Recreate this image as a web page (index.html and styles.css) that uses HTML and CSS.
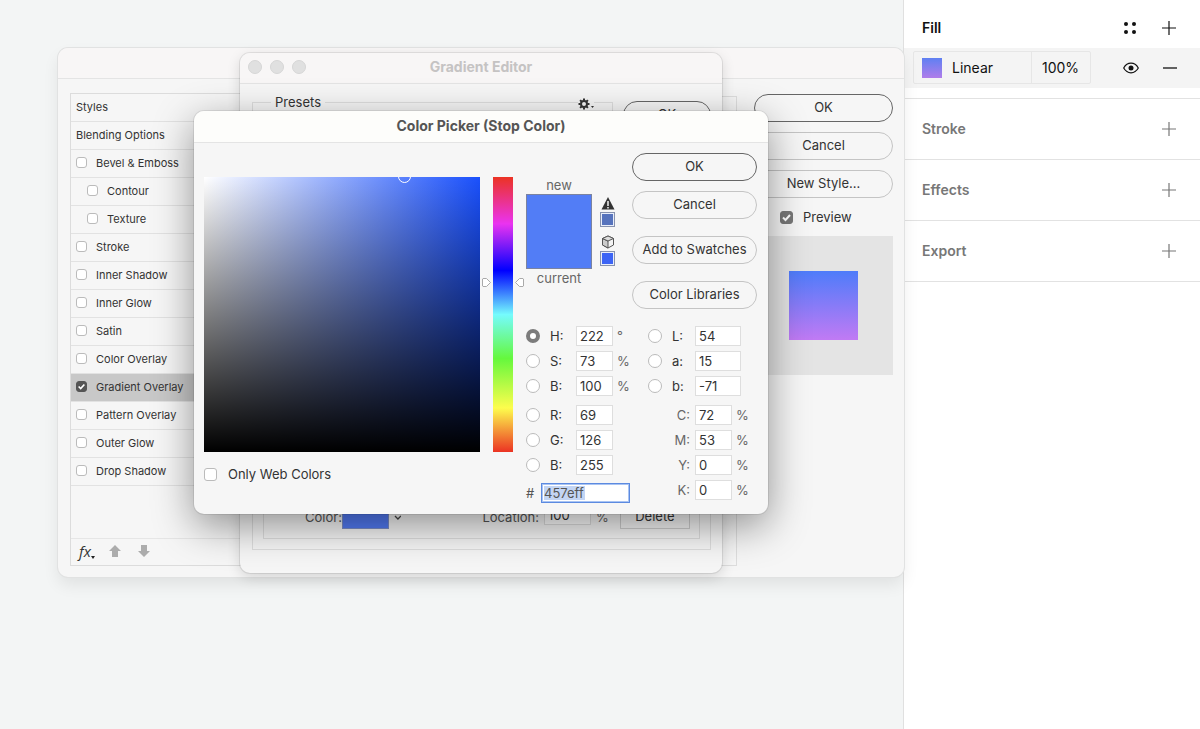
FILE: index.html
```html
<!DOCTYPE html>
<html lang="en">
<head>
<meta charset="utf-8">
<title>Gradient fill</title>
<link rel="stylesheet" href="styles.css">
</head>
<body>
<svg class="defs" aria-hidden="true">
  <symbol id="plus" viewBox="0 0 14 14"><path d="M7 0v14M0 7h14" fill="none" stroke="currentColor" stroke-width="1.2"/></symbol>
</svg>
<div class="app">
  <main class="canvas">

    <section class="window styles-window" aria-label="Layer Style">
      <header class="titlebar tinted"></header>
      <div class="styles-body">
        <div class="style-list">
          <div class="style-row">Styles</div>
          <div class="style-row">Blending Options</div>
          <label class="style-row"><input type="checkbox" class="check small">Bevel &amp; Emboss</label>
          <label class="style-row nested"><input type="checkbox" class="check small">Contour</label>
          <label class="style-row nested"><input type="checkbox" class="check small">Texture</label>
          <label class="style-row"><input type="checkbox" class="check small">Stroke</label>
          <label class="style-row"><input type="checkbox" class="check small">Inner Shadow</label>
          <label class="style-row"><input type="checkbox" class="check small">Inner Glow</label>
          <label class="style-row"><input type="checkbox" class="check small">Satin</label>
          <label class="style-row"><input type="checkbox" class="check small">Color Overlay</label>
          <label class="style-row selected"><input type="checkbox" class="check small" checked>Gradient Overlay</label>
          <label class="style-row"><input type="checkbox" class="check small">Pattern Overlay</label>
          <label class="style-row"><input type="checkbox" class="check small">Outer Glow</label>
          <label class="style-row"><input type="checkbox" class="check small">Drop Shadow</label>
          <div class="list-tools">
            <button class="icon-button fx" aria-label="Add effect"><i>fx</i><svg width="4" height="3" viewBox="0 0 4 3"><path d="M0 0h4L2 3z" fill="#222"/></svg></button>
            <button class="icon-button" aria-label="Move up"><svg width="12" height="12" viewBox="0 0 12 12"><path d="M6 0l6 6H9v6H3V6H0z" fill="#acacac"/></svg></button>
            <button class="icon-button" aria-label="Move down"><svg width="12" height="12" viewBox="0 0 12 12"><path d="M6 12l6-6H9V0H3v6H0z" fill="#acacac"/></svg></button>
          </div>
        </div>
        <div class="settings-frame"></div>
        <div class="side-actions">
          <button class="pill primary">OK</button>
          <button class="pill">Cancel</button>
          <button class="pill">New Style...</button>
          <label class="preview-toggle"><input type="checkbox" class="check" checked>Preview</label>
          <div class="preview-box"><div class="preview-swatch"></div></div>
        </div>
      </div>
    </section>

    <section class="window editor-window" aria-label="Gradient Editor">
      <header class="titlebar tinted lights-bar">
        <div class="lights"><span class="light"></span><span class="light"></span><span class="light"></span></div>
        <h2 class="window-title faded">Gradient Editor</h2>
      </header>
      <div class="editor-body">
        <div class="editor-top">
          <fieldset class="presets">
            <legend>Presets</legend>
            <button class="icon-button gear" aria-label="Preset options">
              <svg width="16" height="12" viewBox="0 0 16 12"><g stroke="#333" stroke-width="2"><path d="M6 .5v2M6 9.500v2M.5 6h2M9.500 6h2M2.100 2.100l1.500 1.500M8.400 8.400l1.500 1.500M9.900 2.100L8.400 3.600M3.600 8.400L2.100 9.900"/><circle cx="6" cy="6" r="3" fill="none"/></g><path d="M13 8h3l-1.500 2z" fill="#333"/></svg>
            </button>
          </fieldset>
          <button class="pill primary">OK</button>
        </div>
        <div class="stops-frame">
          <div class="stops">
            <span class="stop-label">Color:</span>
            <button class="stop-color" aria-label="Stop color"></button>
            <svg class="chevron" width="8" height="5" viewBox="0 0 8 5"><path d="M1 1l3 3 3-3" fill="none" stroke="#444" stroke-width="1.300"/></svg>
            <label class="stop-label location" for="location">Location:</label>
            <input class="field stop-location" id="location" value="100">
            <span class="percent">%</span>
            <button class="delete">Delete</button>
          </div>
        </div>
      </div>
    </section>

    <section class="window picker-window" aria-label="Color Picker">
      <header class="titlebar"><h2 class="window-title">Color Picker (Stop Color)</h2></header>
      <div class="picker-body">
        <div class="picker-left">
          <div class="spectrum-row">
            <div class="spectrum"><span class="ring"></span></div>
            <div class="hue">
              <svg class="handle handle-left" width="9" height="9" viewBox="0 0 9 9"><path d="M1 .5h3.500L8.500 4.500 4.500 8.500H1L.5 8V1z" fill="#fff" stroke="#aaa"/></svg>
              <svg class="handle handle-right" width="9" height="9" viewBox="0 0 9 9"><path d="M8 .5H4.500L.5 4.500l4 4H8l.5-.5V1z" fill="#fff" stroke="#aaa"/></svg>
            </div>
          </div>
          <label class="web-only"><input type="checkbox" class="check">Only Web Colors</label>
        </div>
        <div class="picker-right">
          <div class="picker-top">
            <div class="compare"><span>new</span><div class="compare-swatch"></div><span>current</span></div>
            <div class="warnings">
              <svg width="14" height="14" viewBox="0 0 14 14"><path d="M7 1l6.500 12.500H.5z" fill="#333"/><path d="M7 5v5M7 11v1.500" stroke="#fff" stroke-width="1.400"/></svg>
              <button class="mini gamut" aria-label="Use printable color"></button>
              <svg class="cube" width="14" height="14" viewBox="0 0 14 14"><path d="M7 1l5.500 2.500v6.500L7 13 1.500 10V3.500z" fill="#f4f4f4" stroke="#555"/><path d="M1.500 3.500L7 6v7l-5.500-3z" fill="#ccc" stroke="#555"/><path d="M7 1l5.500 2.500L7 6 1.500 3.500z" fill="#ddd" stroke="#555"/></svg>
              <button class="mini web" aria-label="Use web color"></button>
            </div>
            <div class="picker-actions">
              <button class="pill primary">OK</button>
              <button class="pill">Cancel</button>
              <button class="pill spaced">Add to Swatches</button>
              <button class="pill spaced">Color Libraries</button>
            </div>
          </div>
          <div class="values">
            <div class="value-column">
              <div class="value-row"><input type="radio" name="channel" class="radio" aria-label="Hue" checked><label for="h">H:</label><input class="field" id="h" value="222"><span class="unit">°</span></div>
              <div class="value-row"><input type="radio" name="channel" class="radio" aria-label="Saturation"><label for="s">S:</label><input class="field" id="s" value="73"><span class="unit">%</span></div>
              <div class="value-row"><input type="radio" name="channel" class="radio" aria-label="Brightness"><label for="v">B:</label><input class="field" id="v" value="100"><span class="unit">%</span></div>
              <div class="value-row group"><input type="radio" name="channel" class="radio" aria-label="Red"><label for="r">R:</label><input class="field" id="r" value="69"></div>
              <div class="value-row"><input type="radio" name="channel" class="radio" aria-label="Green"><label for="g">G:</label><input class="field" id="g" value="126"></div>
              <div class="value-row"><input type="radio" name="channel" class="radio" aria-label="Blue"><label for="b">B:</label><input class="field" id="b" value="255"></div>
              <div class="hex-row"><label for="hex">#</label><input class="field hex" id="hex" value="457eff"></div>
            </div>
            <div class="value-column second">
              <div class="value-row"><input type="radio" name="channel" class="radio" aria-label="Lightness"><label for="lab-l">L:</label><input class="field wide" id="lab-l" value="54"></div>
              <div class="value-row"><input type="radio" name="channel" class="radio" aria-label="Lab a"><label for="lab-a">a:</label><input class="field wide" id="lab-a" value="15"></div>
              <div class="value-row"><input type="radio" name="channel" class="radio" aria-label="Lab b"><label for="lab-b">b:</label><input class="field wide" id="lab-b" value="-71"></div>
              <div class="value-row ink group"><label for="c">C:</label><input class="field" id="c" value="72"><span class="unit">%</span></div>
              <div class="value-row ink"><label for="m">M:</label><input class="field" id="m" value="53"><span class="unit">%</span></div>
              <div class="value-row ink"><label for="y">Y:</label><input class="field" id="y" value="0"><span class="unit">%</span></div>
              <div class="value-row ink"><label for="k">K:</label><input class="field" id="k" value="0"><span class="unit">%</span></div>
            </div>
          </div>
        </div>
      </div>
    </section>
  </main>

  <aside class="panel">
    <section class="panel-section fill">
      <div class="panel-head">
        <h3>Fill</h3>
        <button class="icon-button" aria-label="Styles"><svg width="14" height="14" viewBox="0 0 14 14" fill="#111"><circle cx="3" cy="3" r="2"/><circle cx="11" cy="3" r="2"/><circle cx="3" cy="11" r="2"/><circle cx="11" cy="11" r="2"/></svg></button>
        <button class="icon-button" aria-label="Add fill"><svg width="14" height="14"><use href="#plus"/></svg></button>
      </div>
      <div class="fill-row">
        <div class="fill-control">
          <button class="fill-type"><span class="fill-swatch"></span>Linear</button>
          <input class="opacity" aria-label="Opacity" value="100%">
        </div>
        <button class="icon-button eye" aria-label="Toggle visibility"><svg width="16" height="12" viewBox="0 0 16 12"><path d="M.7 6C2.500 2.800 5 1.200 8 1.200S13.500 2.800 15.300 6C13.500 9.200 11 10.800 8 10.800S2.500 9.200.7 6z" fill="none" stroke="#111" stroke-width="1.200"/><circle cx="8" cy="6" r="2.500" fill="#111"/></svg></button>
        <button class="icon-button" aria-label="Remove fill"><svg width="14" height="14" viewBox="0 0 14 14"><path d="M0 7h14" stroke="#111" stroke-width="1.300"/></svg></button>
      </div>
    </section>
    <section class="panel-section muted"><div class="panel-head"><h3>Stroke</h3><button class="icon-button" aria-label="Add stroke"><svg width="14" height="14"><use href="#plus"/></svg></button></div></section>
    <section class="panel-section muted"><div class="panel-head"><h3>Effects</h3><button class="icon-button" aria-label="Add effect"><svg width="14" height="14"><use href="#plus"/></svg></button></div></section>
    <section class="panel-section muted"><div class="panel-head"><h3>Export</h3><button class="icon-button" aria-label="Add export"><svg width="14" height="14"><use href="#plus"/></svg></button></div></section>
  </aside>
</div>
</body>
</html>
```
FILE: styles.css
```css
* { box-sizing: border-box; }

body {
  margin: 0;
  font: 13px/16px Inter, "Liberation Sans", sans-serif;
  color: #333;
  background: #f3f5f5;
}

button, input { font: inherit; color: inherit; margin: 0; }
h2, h3 { margin: 0; }
.defs { position: absolute; width: 0; height: 0; }
.icon-button { display: flex; padding: 0; border: 0; background: none; }

.app { display: flex; min-height: 100vh; }
.canvas { position: relative; z-index: 1; flex: 1; }

/* Windows */
.window {
  position: absolute;
  display: flex;
  flex-direction: column;
  border-radius: 10px;
  background: #f6f6f6;
}
.titlebar {
  display: flex;
  align-items: center;
  justify-content: center;
  height: 32px;
  border-bottom: 1px solid #e4e4e4;
  border-radius: 10px 10px 0 0;
  background: #fdfdfb;
}
.tinted { height: 31px; background: #f8f6f6; }
.window-title { font-size: 14px; font-weight: 700; color: #555; }
.faded { color: #c5c3c3; }

/* Controls */
.pill {
  height: 28px;
  padding: 0 0 2px;
  border: 1px solid #c4c4c4;
  border-radius: 14px;
  background: transparent;
  line-height: 24px;
}
.primary { border-color: #666; }
.check {
  appearance: none;
  flex: none;
  width: 13px;
  height: 13px;
  border: 1px solid #bbb;
  border-radius: 3px;
  background: #fff;
}
.check:checked {
  border-color: #777;
  background: #777 url("data:image/svg+xml,%3Csvg xmlns='http://www.w3.org/2000/svg' viewBox='0 0 11 11'%3E%3Cpath d='M2 5.500l2.500 2.500L9 3' fill='none' stroke='white' stroke-width='2'/%3E%3C/svg%3E") center / 100% no-repeat;
}
.small { width: 11px; height: 11px; }
.small:checked { background-color: #555; border-color: #555; }
.radio {
  appearance: none;
  width: 14px;
  height: 14px;
  border: 1px solid #bbb;
  border-radius: 50%;
  background: #fff;
}
.radio:checked { border: 4px solid #7c7c7c; }
.field {
  width: 37px;
  height: 20px;
  padding: 0 0 0 3px;
  border: 1px solid #dedede;
  background: #fff;
}

/* Layer styles window */
.styles-window {
  left: 58px;
  top: 48px;
  width: 846px;
  height: 529px;
  box-shadow: 0 0 0 1px #e1e2e2, 0 8px 16px rgba(0, 0, 0, .08);
}
.styles-body { display: flex; flex: 1; padding: 14px 11px 11px 12px; }
.style-list {
  display: flex;
  flex-direction: column;
  width: 180px;
  border: 1px solid #dcdcdc;
  font-size: 11px;
}
.style-row {
  display: flex;
  align-items: center;
  gap: 9px;
  height: 28px;
  padding: 0 5px 2px;
  border-bottom: 1px solid #e2e2e2;
}
.nested { padding-left: 16px; }
.selected { background: #c8c8c8; }
.list-tools {
  display: flex;
  align-items: center;
  gap: 17px;
  height: 27px;
  margin-top: auto;
  padding: 0 0 2px 8px;
  border-top: 1px solid #e6e6e6;
}
.fx { align-items: flex-end; font: 15px/16px "Open Sans", sans-serif; margin-right: -3px; }
.settings-frame { flex: 1; margin: 3px 17px 0 10px; border: 1px solid #dedede; }
.side-actions { display: flex; flex-direction: column; gap: 10px; width: 139px; margin-top: 1px; }
.preview-toggle { display: flex; align-items: center; gap: 10px; height: 18px; padding-left: 26px; }
.preview-box {
  display: flex;
  align-items: center;
  justify-content: center;
  height: 139px;
  background: #e4e4e4;
}
.preview-swatch { width: 69px; height: 69px; background: linear-gradient(#4e7cfa, #c17af4); }

/* Gradient editor window */
.editor-window {
  left: 240px;
  top: 53px;
  width: 482px;
  height: 520px;
  box-shadow: 0 0 0 1px rgba(0, 0, 0, .08), 0 4px 14px rgba(0, 0, 0, .14);
}
.lights-bar { display: grid; grid-template-columns: 1fr auto 1fr; padding: 0 8px 2px; justify-content: stretch; }
.lights { display: flex; gap: 8px; }
.light { width: 14px; height: 14px; border: 1px solid #d6d6d6; border-radius: 50%; background: #e0e0e0; }
.editor-body { display: flex; flex: 1; flex-direction: column; padding: 10px 11px 23px 12px; }
.editor-top { display: flex; align-items: flex-start; gap: 10px; }
.presets {
  flex: 1;
  display: flex;
  justify-content: flex-end;
  height: 90px;
  margin: 0;
  padding: 0 18px;
  border: 1px solid #dedede;
}
.presets legend { padding: 0 4px; }
.gear { align-self: flex-start; margin-top: -12px; background: #f6f6f6; }
.editor-top .pill { width: 88px; margin-top: 7px; }
.stops-frame { margin-top: auto; padding: 10px; border: 1px solid #dedede; }
.stops {
  display: flex;
  align-items: flex-end;
  height: 90px;
  padding: 0 9px 9px 41px;
  border: 1px solid #dedede;
}
.stop-label { padding-bottom: 4px; color: #555; }
.stop-color { width: 47px; height: 20px; border: 1px solid #7c8fc8; background: #527bf5; }
.chevron { margin: 0 0 9px 5px; }
.location { margin-left: 81px; }
.stop-location { width: 47px; margin: 0 5px 4px; }
.percent { padding-bottom: 4px; color: #666; }
.delete {
  width: 71px;
  height: 24px;
  margin-left: 11px;
  padding: 0 0 2px;
  border: 1px solid #cfcfcf;
  background: transparent;
}

/* Color picker window */
.picker-window {
  left: 194px;
  top: 111px;
  width: 574px;
  box-shadow: 0 0 0 1px rgba(0, 0, 0, .08), 0 12px 40px rgba(0, 0, 0, .42);
}
.picker-window .titlebar { padding-bottom: 2px; }
.picker-body { display: flex; gap: 13px; padding: 10px 11px 11px 10px; }
.picker-left { padding-top: 24px; }
.spectrum-row { display: flex; gap: 13px; }
.spectrum {
  position: relative;
  overflow: hidden;
  width: 276px;
  height: 275px;
  background: linear-gradient(to top, #000, transparent), linear-gradient(to right, #fff, #1a50fc);
}
.ring {
  position: absolute;
  left: 73%;
  top: 0;
  width: 13px;
  height: 13px;
  margin: -7px;
  border: 1px solid #fff;
  border-radius: 50%;
}
.hue {
  position: relative;
  width: 20px;
  background: linear-gradient(#eb3323, #ea33f0 17%, #00f 34%, #75fbfd 50%, #65f83d 66%, #fdfd4d 84%, #eb3323);
}
.handle { position: absolute; top: 101px; }
.handle-left { right: 22px; }
.handle-right { left: 22px; }
.web-only { display: flex; align-items: center; gap: 11px; margin-top: 14px; }
.picker-right { flex: 1; min-width: 0; }
.picker-top { display: flex; }
.compare { width: 66px; padding-top: 24px; text-align: center; color: #666; }
.compare-swatch { height: 75px; margin: 1px 0; border: 1px solid #7b83a0; background: #527df6; }
.warnings { display: flex; flex-direction: column; align-items: center; width: 15px; margin: 43px 17px 0 8px; }
.mini { width: 15px; height: 15px; margin-top: 2px; padding: 0; border: 1px solid #8792ae; box-shadow: inset 0 0 0 1px #e9eefa; }
.gamut { background: #5673bd; }
.web { background: #3c64f5; }
.cube { margin-top: 8px; }
.picker-actions { display: flex; flex: 1; flex-direction: column; gap: 10px; }
.spaced { margin-top: 7px; }
.values { display: flex; margin-top: 17px; }
.value-column { display: flex; flex-direction: column; gap: 5px; width: 122px; }
.value-row { display: grid; grid-template-columns: 24px 26px auto 1fr; align-items: center; height: 20px; }
.group { margin-top: 4px; }
.unit { padding-left: 4px; color: #666; }
.second { flex: 1; width: auto; }
.second .value-row { grid-template-columns: 24px 23px auto 1fr; }
.second .ink { grid-template-columns: 47px auto 1fr; }
.ink label { padding-right: 5px; text-align: right; color: #666; }
.second .wide { width: 46px; }
.hex-row { display: grid; grid-template-columns: 15px 89px; align-items: center; margin-top: 3px; color: #555; }
.hex {
  width: 89px;
  padding-left: 2px;
  border: 1px solid #5c8ae0;
  outline: 1px solid #a9c4f3;
  outline-offset: -2px;
  background: #fff linear-gradient(#c3d5f4, #c3d5f4) 2px 2px / 41px 14px no-repeat;
}

/* Properties panel */
.panel { width: 297px; border-left: 1px solid #e0e0e0; background: #fff; color: #111; font-size: 14px; }
.panel-section { border-bottom: 1px solid #e2e2e2; }
.panel-head { display: flex; align-items: center; gap: 25px; height: 60px; padding: 0 24px 0 18px; }
.panel-head h3 { flex: 1; font-size: 14px; font-weight: 600; }
.muted { color: #777; }
.fill { padding-bottom: 10px; }
.fill .panel-head { height: 48px; padding-top: 8px; }
.fill-row { display: flex; align-items: center; gap: 24px; padding: 3px 23px 4px 9px; background: #f4f4f4; }
.fill-control { display: flex; width: 178px; height: 33px; border: 1px solid #e6e6e6; border-radius: 2px; }
.fill-type { display: flex; flex: 1; align-items: center; gap: 10px; padding: 0 8px; border: 0; border-right: 1px solid #e6e6e6; background: none; }
.fill-swatch { width: 20px; height: 20px; background: linear-gradient(#5f80f2, #b07dea); }
.opacity { width: 58px; padding: 0 0 0 10px; border: 0; background: none; }
.eye { margin-left: auto; }
```
